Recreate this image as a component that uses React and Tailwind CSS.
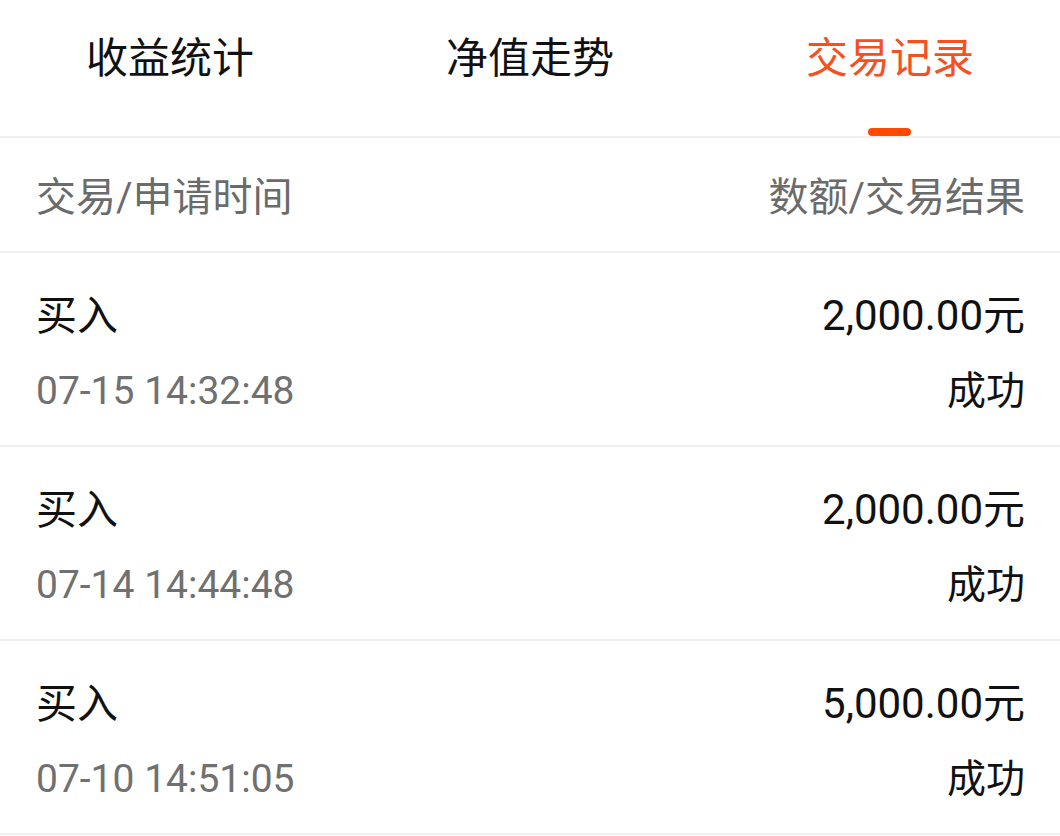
import React from "react";

const records = [
  { type: "买入", time: "07-15 14:32:48", amount: "2,000.00元", result: "成功" },
  { type: "买入", time: "07-14 14:44:48", amount: "2,000.00元", result: "成功" },
  { type: "买入", time: "07-10 14:51:05", amount: "5,000.00元", result: "成功" },
];

const tabs = ["收益统计", "净值走势", "交易记录"];

export default function App() {
  const active = 2;
  return (
    <div
      className="w-[1060px] min-h-[836px] bg-white"
      style={{ fontFamily: 'Roboto, "Noto Sans CJK SC", sans-serif' }}
    >
      <div className="flex justify-between px-[86px] h-[138px] border-b-2 border-[#f0f0f0]">
        {tabs.map((t, i) => (
          <div key={t} className="relative flex flex-col items-center">
            <span
              className={
                "mt-[34px] text-[42px] leading-[50px] " +
                (i === active ? "text-[#f5501e]" : "text-[#111]")
              }
            >
              {t}
            </span>
            {i === active && (
              <div className="absolute bottom-0 w-[43px] h-[8px] rounded-full bg-[#ff4a00]" />
            )}
          </div>
        ))}
      </div>

      <div className="flex justify-between items-center h-[115px] pt-[6px] pl-[36px] pr-[35px] border-b-2 border-[#f0f0f0] text-[40px] text-[#6b6b6b]">
        <span>交易/申请时间</span>
        <span>数额/交易结果</span>
      </div>

      {records.map((r, i) => (
        <div
          key={i}
          className="flex justify-between h-[194px] pl-[36px] pr-[35px] pt-[39px] border-b-2 border-[#f0f0f0]"
        >
          <div className="flex flex-col">
            <span className="text-[41px] leading-[48px] text-[#111]">{r.type}</span>
            <span className="mt-[27px] text-[39px] leading-[48px] text-[#707070]">{r.time}</span>
          </div>
          <div className="flex flex-col items-end">
            <span className="text-[42px] leading-[48px] text-[#111]">{r.amount}</span>
            <span className="mt-[27px] text-[39px] leading-[48px] text-[#111]">{r.result}</span>
          </div>
        </div>
      ))}
    </div>
  );
}
